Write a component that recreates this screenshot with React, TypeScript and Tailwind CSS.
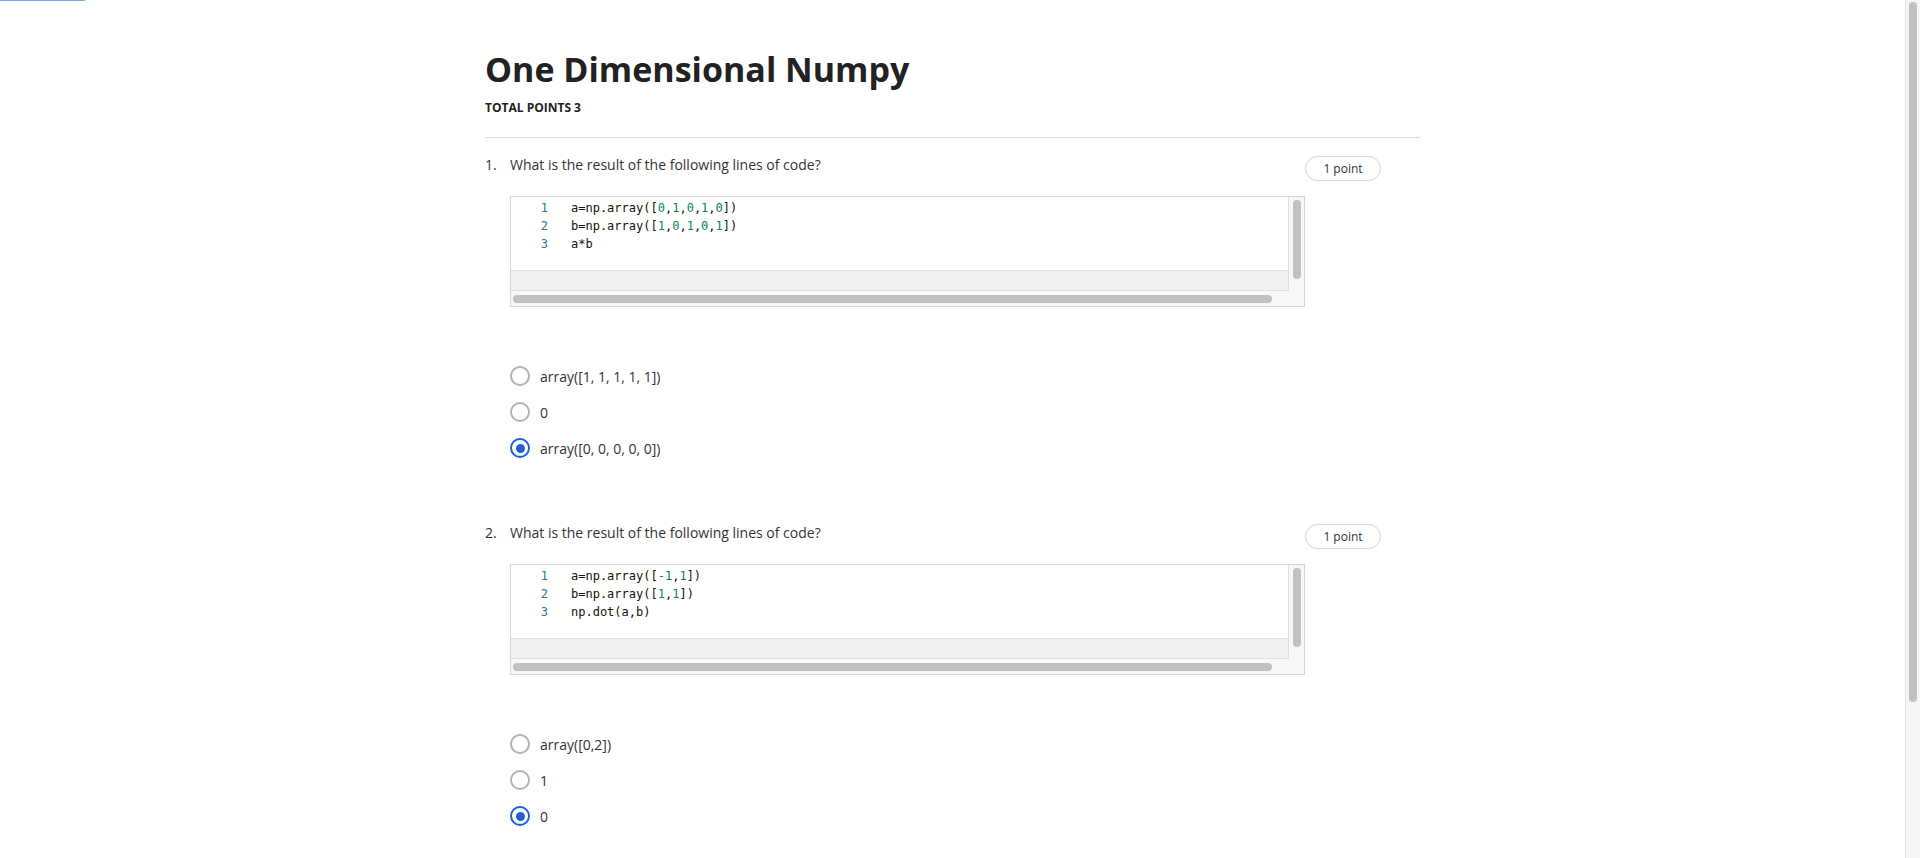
import React from 'react';

interface Token {
  text: string;
  num?: boolean;
}

interface Question {
  id: number;
  prompt: string;
  code: Token[][];
  options: string[];
  selected: number;
}

const questions: Question[] = [
  {
    id: 1,
    prompt: 'What is the result of the following lines of code?',
    code: [
      [
        { text: 'a=np.array([' },
        { text: '0', num: true },
        { text: ',' },
        { text: '1', num: true },
        { text: ',' },
        { text: '0', num: true },
        { text: ',' },
        { text: '1', num: true },
        { text: ',' },
        { text: '0', num: true },
        { text: '])' },
      ],
      [
        { text: 'b=np.array([' },
        { text: '1', num: true },
        { text: ',' },
        { text: '0', num: true },
        { text: ',' },
        { text: '1', num: true },
        { text: ',' },
        { text: '0', num: true },
        { text: ',' },
        { text: '1', num: true },
        { text: '])' },
      ],
      [{ text: 'a*b' }],
    ],
    options: ['array([1, 1, 1, 1, 1])', '0', 'array([0, 0, 0, 0, 0])'],
    selected: 2,
  },
  {
    id: 2,
    prompt: 'What is the result of the following lines of code?',
    code: [
      [{ text: 'a=np.array([' }, { text: '-1', num: true }, { text: ',' }, { text: '1', num: true }, { text: '])' }],
      [{ text: 'b=np.array([' }, { text: '1', num: true }, { text: ',' }, { text: '1', num: true }, { text: '])' }],
      [{ text: 'np.dot(a,b)' }],
    ],
    options: ['array([0,2])', '1', '0'],
    selected: 2,
  },
];

function CodeBox({ lines }: { lines: Token[][] }) {
  return (
    <div className="border border-[#d6d6d6] bg-[#f7f7f7] flex flex-col">
      <div className="flex">
        <div className="flex-1 border-r border-b border-[#dedede]">
          <div className="h-[73px] bg-[#fffffd] pt-[2px] font-['DejaVu_Sans_Mono',monospace] text-[12px] leading-[18px] text-[#111]">
            {lines.map((line, i) => (
              <div key={i} className="flex">
                <span className="w-[37px] text-right text-[#237893]">{i + 1}</span>
                <span className="pl-[23px] whitespace-pre">
                  {line.map((t, j) => (
                    <span key={j} className={t.num ? 'text-[#098658]' : ''}>
                      {t.text}
                    </span>
                  ))}
                </span>
              </div>
            ))}
          </div>
          <div className="h-[20px] bg-[#f0f0f0] border-t border-[#dedede]" />
        </div>
        <div className="w-[15px] pt-[3px] flex justify-center">
          <div className="w-[8px] h-[79px] rounded-full bg-[#c1c1c1]" />
        </div>
      </div>
      <div className="h-[15px] flex items-center pl-[2px]">
        <div className="w-[759px] h-[8px] rounded-full bg-[#c1c1c1]" />
      </div>
    </div>
  );
}

function Radio({ checked }: { checked: boolean }) {
  if (checked) {
    return (
      <span className="w-[20px] h-[20px] rounded-full border-[2.5px] border-[#1f5fcf] flex items-center justify-center">
        <span className="w-[9px] h-[9px] rounded-full bg-[#1f5fcf]" />
      </span>
    );
  }
  return <span className="w-[20px] h-[20px] rounded-full border-2 border-[#b3b3b3]" />;
}

function QuestionBlock({ q, first }: { q: Question; first: boolean }) {
  return (
    <div className={first ? 'flex items-start pt-[17px]' : 'flex items-start mt-[57px]'}>
      <div className="w-[25px] text-[14px] leading-5 text-[#333]">{q.id}.</div>
      <div className="w-[795px]">
        <p className="text-[14px] leading-5 text-[#333]">{q.prompt}</p>
        <div className="mt-[21px]">
          <CodeBox lines={q.code} />
        </div>
        <div className="mt-[51px] flex flex-col">
          {q.options.map((opt, i) => (
            <label key={i} className="h-[36px] flex items-center">
              <Radio checked={i === q.selected} />
              <span className="ml-[10px] text-[14px] text-[#333]">{opt}</span>
            </label>
          ))}
        </div>
      </div>
      <div className="mt-[1px] w-[76px] h-[25px] rounded-full border border-[#d4d4d4] flex items-center justify-center text-[12px] text-[#333]">
        1 point
      </div>
    </div>
  );
}

export default function App() {
  return (
    <div className="h-[858px] w-full flex overflow-hidden bg-white font-['Open_Sans',sans-serif]">
      <div className="flex-1 min-w-0">
        <div className="h-px w-[85px] bg-[#7ea8f6]" />
        <div className="mx-auto w-[935px] pt-[44px]">
          <h1 className="text-[34px] leading-[48px] font-bold text-[#222]">One Dimensional Numpy</h1>
          <div className="mt-[7px] text-[12px] leading-4 font-bold text-[#222]">TOTAL POINTS 3</div>
          <div className="mt-[21px] border-t border-[#dcdcdc]" />
          {questions.map((q, i) => (
            <QuestionBlock key={q.id} q={q} first={i === 0} />
          ))}
        </div>
      </div>
      <div className="w-[15px] bg-[#f5f5f5] border-l border-[#e3e3e3] pt-[2px] flex justify-center">
        <div className="w-[8px] h-[700px] rounded-full bg-[#c1c1c1]" />
      </div>
    </div>
  );
}
